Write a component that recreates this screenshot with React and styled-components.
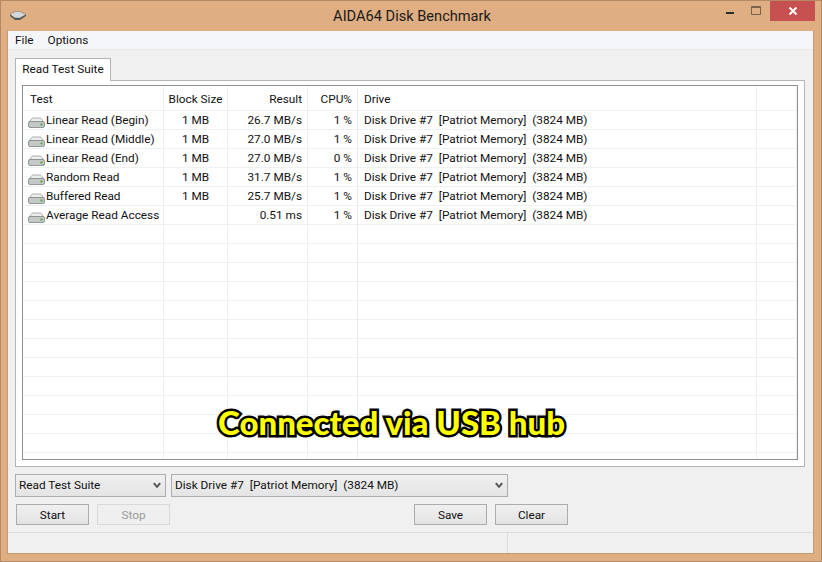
import React from 'react';
import styled, { createGlobalStyle } from 'styled-components';

const GlobalStyle = createGlobalStyle`
html, body {
  margin: 0;
  padding: 0;
  background: #dfae82;
}
* { box-sizing: border-box; }
`;

const COLUMNS = '141px 64px 80px 50px 399px 1fr';

const rows = [
  ['Linear Read (Begin)', '1 MB', '26.7 MB/s', '1 %'],
  ['Linear Read (Middle)', '1 MB', '27.0 MB/s', '1 %'],
  ['Linear Read (End)', '1 MB', '27.0 MB/s', '0 %'],
  ['Random Read', '1 MB', '31.7 MB/s', '1 %'],
  ['Buffered Read', '1 MB', '25.7 MB/s', '1 %'],
  ['Average Read Access', '', '0.51 ms', '1 %'],
];

const DRIVE = 'Disk Drive #7  [Patriot Memory]  (3824 MB)';
const EMPTY_ROWS = 13;

const Window = styled.div`
position: relative;
width: 822px;
height: 562px;
display: flex;
flex-direction: column;
overflow: hidden;
background: #dfae82;
border: 1px solid #b38a63;
font-family: Roboto, "Noto Sans", sans-serif;
font-size: 11.8px;
color: #111;
`;

const TitleBar = styled.div`
height: 30px;
flex: none;
display: flex;
align-items: flex-start;
padding: 0 6px 0 9px;
`;

const AppIcon = styled.svg`
width: 16px;
height: 9px;
margin-top: 10px;
flex: none;
`;

const Title = styled.div`
flex: 1;
text-align: center;
font-size: 14.6px;
line-height: 30px;
color: #1a1a1a;
padding-left: 82px;
`;

const Controls = styled.div`
display: flex;
align-items: flex-start;
`;

const ControlButton = styled.div`
width: ${p => p.$wide ? '45px' : '27px'};
height: 20px;
display: flex;
align-items: center;
justify-content: center;
background: ${p => p.$wide ? '#c75050' : 'transparent'};
`;

const Client = styled.div`
flex: 1;
margin: 0 7px 7px 6px;
display: flex;
flex-direction: column;
background: #f0f0f0;
border: 1px solid #c39a74;
border-top: none;
`;

const MenuBar = styled.div`
height: 19px;
flex: none;
display: flex;
align-items: center;
gap: 14px;
padding: 1px 0 0 7px;
background: #f5f6fa;
border-bottom: 1px solid #e8e8e8;
`;

const MenuItem = styled.span`
line-height: 19px;
`;

const TabStrip = styled.div`
height: 30px;
flex: none;
display: flex;
align-items: flex-end;
padding-left: 7px;
`;

const Tab = styled.div`
height: 23px;
width: 96px;
margin-bottom: -1px;
position: relative;
z-index: 1;
text-align: center;
line-height: 21px;
background: #fff;
border: 1px solid #b4b4b4;
border-bottom: none;
`;

const Panel = styled.div`
height: 387px;
margin: 0 8px 0 7px;
flex: none;
padding: 4px 6px 6px 6px;
background: #fff;
border: 1px solid #b4b4b4;
`;

const List = styled.div`
height: 100%;
padding-top: 1px;
overflow: hidden;
background: #fff;
border: 1px solid #8f8f8f;
`;

const Row = styled.div`
display: grid;
grid-template-columns: ${COLUMNS};
height: ${p => p.$header ? '24px' : '19px'};
line-height: 18px;
border-bottom: 1px solid #eef0f2;
`;

const Cell = styled.div`
display: flex;
align-items: center;
justify-content: ${p => p.$align === 'right' ? 'flex-end' : p.$align === 'center' ? 'center' : 'flex-start'};
padding: 0 ${p => p.$align === 'right' ? '5px' : '0'} 0 ${p => p.$inset || '6px'};
white-space: pre;
border-right: 1px solid #e9eef4;
`;

const DriveIcon = styled.svg`
width: 17px;
height: 11px;
margin: 5px 1px 0 0;
flex: none;
`;

const Selects = styled.div`
display: flex;
gap: 5px;
padding: 7px 0 0 7px;
flex: none;
`;

const Select = styled.div`
width: ${p => p.$width}px;
height: 23px;
display: flex;
align-items: center;
justify-content: space-between;
padding: 0 4px 0 3px;
white-space: pre;
line-height: 21px;
background: linear-gradient(#f0f0f0, #e4e4e4);
border: 1px solid #acacac;
`;

const Buttons = styled.div`
display: flex;
padding: 7px 0 0 8px;
flex: none;
`;

const Button = styled.div`
width: 73px;
height: 21px;
margin-left: ${p => p.$gap || 0}px;
text-align: center;
line-height: 20px;
color: ${p => p.$disabled ? '#9a9a9a' : '#111'};
background: ${p => p.$disabled ? '#efefef' : 'linear-gradient(#f0f0f0, #e3e3e3)'};
border: 1px solid ${p => p.$disabled ? '#d9d9d9' : '#acacac'};
`;

const StatusBar = styled.div`
margin-top: 7px;
flex: 1;
display: grid;
grid-template-columns: 500px 1fr;
border-top: 1px solid #dcdcdc;
`;

const StatusCell = styled.div`
border-right: 1px solid #dcdcdc;
`;

const Caption = styled.div`
position: absolute;
left: 217px;
top: 400px;
font-family: Lato, "Open Sans", sans-serif;
font-weight: 900;
font-size: 33px;
line-height: 42px;
white-space: nowrap;
color: #ffff00;
-webkit-text-stroke: 5px #000;
paint-order: stroke fill;
`;

const Chevron = () => (
  <svg width="8" height="7" viewBox="0 0 8 7">
    <path d="M.8 1.2 L4 4.8 L7.2 1.2" fill="none" stroke="#555" strokeWidth="2" />
  </svg>
);

const HardDrive = () => (
  <DriveIcon viewBox="0 0 17 11">
    <path d="M1.5 5 L3.8 1.5 Q4 1 5 1 H12 Q13 1 13.2 1.5 L15.5 5 Z" fill="#eceeee" stroke="#9a9e9e" strokeWidth="0.8" />
    <rect x="0.5" y="4.5" width="16" height="6" rx="1.5" fill="#c4c9c8" stroke="#7f8484" strokeWidth="0.8" />
    <rect x="12.5" y="6.5" width="2" height="2" fill="#4fa53a" />
  </DriveIcon>
);

export default function App() {
  return (
    <Window>
      <GlobalStyle />
      <TitleBar>
        <AppIcon viewBox="0 0 16 9">
          <path d="M0 3.5 L5 .5 H10 L16 3.5 L10 7 H5 Z" fill="#d5d8d8" stroke="#77797a" strokeWidth="0.6" />
          <path d="M0 3.5 V5 L5 9 H10 L16 5 V3.5 L10 7 H5 Z" fill="#55585a" />
        </AppIcon>
        <Title>AIDA64 Disk Benchmark</Title>
        <Controls>
          <ControlButton>
            <svg width="10" height="10" viewBox="0 0 10 10">
              <rect x="1" y="6" width="8" height="2" fill="#2b2b2b" />
            </svg>
          </ControlButton>
          <ControlButton>
            <svg width="11" height="10" viewBox="0 0 11 10">
              <path d="M.5 .5 H9.5 V8.5 H.5 Z" fill="none" stroke="#77634e" />
              <path d="M0 1.5 H10" stroke="#77634e" />
            </svg>
          </ControlButton>
          <ControlButton $wide>
            <svg width="10" height="10" viewBox="0 0 10 10">
              <path d="M1.5 1.5 L8.5 8.5 M8.5 1.5 L1.5 8.5" stroke="#fff" strokeWidth="2" />
            </svg>
          </ControlButton>
        </Controls>
      </TitleBar>
      <Client>
        <MenuBar>
          <MenuItem>File</MenuItem>
          <MenuItem>Options</MenuItem>
        </MenuBar>
        <TabStrip>
          <Tab>Read Test Suite</Tab>
        </TabStrip>
        <Panel>
          <List>
            <Row $header>
              <Cell $inset="7px">Test</Cell>
              <Cell $align="center" $inset="0">Block Size</Cell>
              <Cell $align="right">Result</Cell>
              <Cell $align="right">CPU%</Cell>
              <Cell>Drive</Cell>
              <Cell />
            </Row>
            {rows.map(row => (
              <Row key={row[0]}>
                <Cell $inset="5px"><HardDrive />{row[0]}</Cell>
                <Cell $align="center" $inset="0">{row[1]}</Cell>
                <Cell $align="right">{row[2]}</Cell>
                <Cell $align="right">{row[3]}</Cell>
                <Cell>{DRIVE}</Cell>
                <Cell />
              </Row>
            ))}
            {Array.from({ length: EMPTY_ROWS }, (_, i) => (
              <Row key={i}>
                <Cell /><Cell /><Cell /><Cell /><Cell /><Cell />
              </Row>
            ))}
          </List>
        </Panel>
        <Selects>
          <Select $width={151}>Read Test Suite<Chevron /></Select>
          <Select $width={337}>{DRIVE}<Chevron /></Select>
        </Selects>
        <Buttons>
          <Button>Start</Button>
          <Button $disabled $gap={8}>Stop</Button>
          <Button $gap={244}>Save</Button>
          <Button $gap={8}>Clear</Button>
        </Buttons>
        <StatusBar>
          <StatusCell />
          <div />
        </StatusBar>
      </Client>
      <Caption>Connected via USB hub</Caption>
    </Window>
  );
}
